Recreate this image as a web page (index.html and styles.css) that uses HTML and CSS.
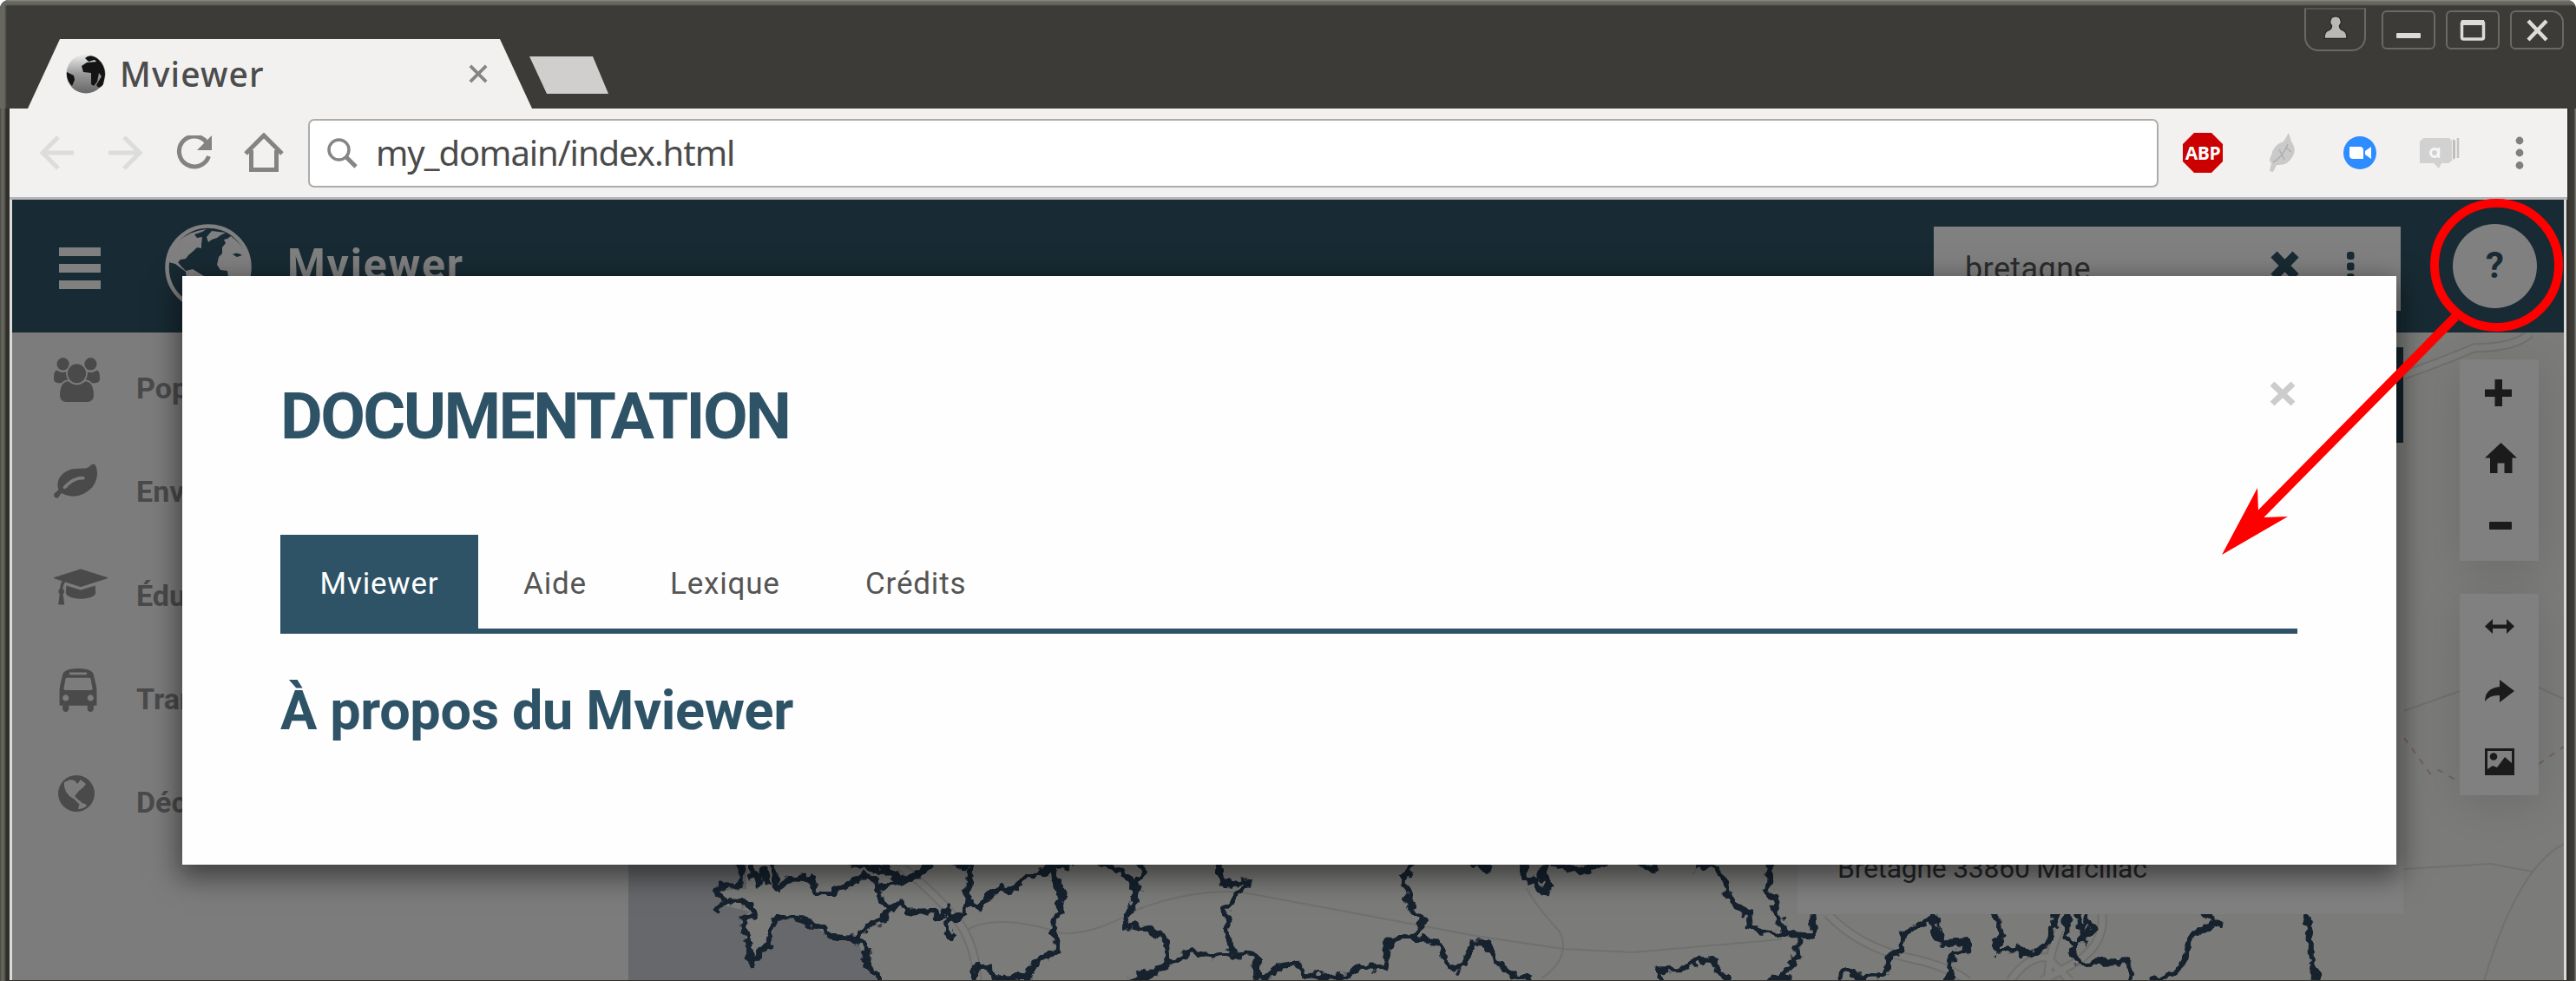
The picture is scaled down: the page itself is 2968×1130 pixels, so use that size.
FILE: index.html
```html
<!DOCTYPE html>
<html lang="fr">
<head>
<meta charset="utf-8">
<title>Mviewer</title>
<link rel="stylesheet" href="styles.css">
</head>
<body>
<div class="window">
  <div class="titlebar">
    <div class="tab">
      <svg class="favicon" viewBox="0 0 46 46"><defs><linearGradient id="fg" x1="0" y1="0" x2="0" y2="1"><stop offset="0" stop-color="#eee"/><stop offset=".5" stop-color="#999"/><stop offset="1" stop-color="#666"/></linearGradient></defs><circle cx="23" cy="23" r="22.5" fill="url(#fg)"/><path d="M22 5Q28-1 37 6Q45 13 45 24L43 35Q38 42 35 36L41 26L38 22L36 32L32 37L29 35L29 22L20 21L18 14L24 10L35 9L33 7L26 9ZM1 21L9 25L10 30L7 37Q0 30 1 21Z" fill="#141414"/></svg>
      <span class="tab-title">Mviewer</span>
      <svg class="tab-close" viewBox="0 0 24 24"><path d="M2 2L22 22M22 2L2 22" stroke="#858585" stroke-width="4"/></svg>
    </div>
    <div class="new-tab"></div>
    <div class="window-buttons">
      <div class="wb user"><svg viewBox="0 0 26 26"><path d="M13 1a5.500 5.500 0 0 1 4 9.500q0 4 3 5q5 1 5 9H1q0-8 5-9q3-1 3-5a5.500 5.500 0 0 1 4-9.500Z" fill="#b9b8b5" stroke="#20201d" stroke-width="1"/></svg></div>
      <div class="wb"><svg viewBox="0 0 30 26"><rect x="1" y="16" width="28" height="6" rx="1" fill="#dcdbd7"/></svg></div>
      <div class="wb"><svg viewBox="0 0 30 26"><rect x="2.500" y="3" width="25" height="20" rx="2" fill="none" stroke="#dcdbd7" stroke-width="3.500"/><path d="M2 4H28" stroke="#dcdbd7" stroke-width="6"/></svg></div>
      <div class="wb close"><svg viewBox="0 0 30 26"><path d="M5 2L26 24M26 2L5 24" stroke="#dcdbd7" stroke-width="4.500"/></svg></div>
    </div>
  </div>

  <div class="toolbar">
    <div class="nav">
      <svg width="40" height="40" viewBox="0 0 40 40" fill="none" stroke="#dcdcdc" stroke-width="5"><path d="M40 20H4M22 2L4 20L22 38"/></svg>
      <svg width="40" height="40" viewBox="0 0 40 40" fill="none" stroke="#dcdcdc" stroke-width="5"><path d="M0 20H36M18 2L36 20L18 38"/></svg>
      <svg width="42" height="40" viewBox="0 0 42 40"><path d="M35 8A17.500 17.500 0 1 0 37.500 24" fill="none" stroke="#838383" stroke-width="5"/><path d="M41 0V17H24Z" fill="#838383"/></svg>
      <svg width="46" height="46" viewBox="0 0 46 46" fill="none" stroke="#838383" stroke-width="5"><path d="M2 24L23 3L44 24M8.500 20V42.500H37.500V20"/></svg>
    </div>
    <div class="address">
      <svg width="35" height="35" viewBox="0 0 35 35" fill="none" stroke="#858585"><circle cx="13.500" cy="13.500" r="11.500" stroke-width="3.500"/><path d="M22 22L33 33" stroke-width="5"/></svg>
      <span class="url">my_domain/index.html</span>
    </div>
    <div class="extensions">
      <div class="abp"><svg width="46" height="46" viewBox="0 0 46 46"><path d="M13 0H33L46 13V33L33 46H13L0 33V13Z" fill="#cb0000"/></svg><span>ABP</span></div>
      <svg width="34" height="46" viewBox="0 0 34 46"><path d="M25 0L28 10Q35 20 29 28Q24 38 11 37L7 45L3 44L5 35Q1 32 5 26Q7 14 19 10Z" fill="#cacaca"/><path d="M7 34Q18 28 24 13M14 19L20 31M22 17L28 22" stroke="#aeaeae" stroke-width="1.500" fill="none"/></svg>
      <svg class="zoom" width="40" height="40" viewBox="0 0 40 40"><circle cx="20" cy="20" r="19" fill="#2d8cff"/><path d="M8 13H20Q24 13 24 17V27H12Q8 27 8 23ZM26 18L33 13V27L26 22Z" fill="#fff"/></svg>
      <svg class="chat" width="46" height="36" viewBox="0 0 46 36"><path d="M4 1H34L37 4V27L33 30H25L22 36L16 30H0V5Z" fill="#d1d1d1"/><path d="M38 2L41 4V24L38 26Z" fill="#bdbdbd"/><path d="M44 1V24" stroke="#c4c4c4" stroke-width="2.500"/><circle cx="17" cy="18" r="4.500" fill="none" stroke="#f6f6f6" stroke-width="3"/><path d="M22 12V24" stroke="#f6f6f6" stroke-width="2.500"/></svg>
      <svg class="dots" width="10" height="38" viewBox="0 0 10 38" fill="#7f7f7f"><circle cx="5" cy="5" r="4.400"/><circle cx="5" cy="19" r="4.400"/><circle cx="5" cy="33.500" r="4.400"/></svg>
    </div>
  </div>

  <div class="page">
    <header class="app-header">
      <div class="burger"><i></i><i></i><i></i></div>
      <svg class="globe" viewBox="0 0 100 100"><circle cx="50" cy="50" r="47.500" fill="none" stroke="#808080" stroke-width="4.500"/><path d="M14 21Q28 8 48 6L43 9L34 12L37 16L43 15L42 24L42 28L37 27L33 31L27 36L24 40L18 41L15 44L19 49L24 54L32 52L45 60L40 85L28 92L24 55L12 46L4 44Q6 30 14 21ZM54 8L70 10L64 13L60 16L54 18L50 21L48 15ZM76 14Q98 30 98 52L90 76L76 80L72 54L64 53L60 47L62 38L66 34L66 27L70 22L68 18L72 17Z" fill="#808080"/><path d="M78 35Q83 32 89 36L83 38Z" fill="#182a33"/></svg>
      <span class="brand">Mviewer</span>
      <div class="search">
        <span class="query">bretagne</span>
        <svg class="clear" width="33" height="34" viewBox="0 0 33 34"><path d="M4 4L29 30M29 4L4 30" stroke="#182a33" stroke-width="10"/></svg>
        <svg class="more" width="10" height="36" viewBox="0 0 10 36" fill="#182a33"><rect x="1" y="1" width="8.500" height="9" rx="3"/><rect x="1" y="13.500" width="8.500" height="9" rx="3"/><rect x="1" y="26" width="8.500" height="9" rx="3"/></svg>
      </div>
      <div class="help">?</div>
    </header>
    <div class="app-body">
      <nav class="themes">
        <div class="theme"><span class="ic"><svg width="53" height="51" viewBox="0 0 1920 1792" preserveAspectRatio="none"><path d="M593 896q-162 5-265 128h-134q-82 0-138-40.500t-56-118.500q0-353 124-353 6 0 43.500 21t97.500 42.500 119 21.500q67 0 133-23-5 37-5 66 0 139 81 256zm1071 637q0 120-73 189.500t-194 69.500h-874q-121 0-194-69.500t-73-189.500q0-53 3.500-103.500t14-109 26.500-108.500 43-97.500 62-81 85.500-53.500 111.500-20q10 0 43 21.500t73 48 107 48 135 21.500 135-21.500 107-48 73-48 43-21.500q61 0 111.500 20t85.500 53.500 62 81 43 97.500 26.500 108.500 14 109 3.500 103.500zm-1024-1277q0 106-75 181t-181 75-181-75-75-181 75-181 181-75 181 75 75 181zm704 384q0 159-112.500 271.500t-271.500 112.500-271.500-112.500-112.500-271.500 112.500-271.500 271.500-112.500 271.500 112.500 112.500 271.500zm576 225q0 78-56 118.500t-138 40.500h-134q-103-123-265-128 81-117 81-256 0-29-5-66 66 23 133 23 59 0 119-21.500t97.500-42.500 43.500-21q124 0 124 353zm-128-609q0 106-75 181t-181 75-181-75-75-181 75-181 181-75 181 75 75 181z"/></svg></span><b>Population</b></div>
        <div class="theme"><span class="ic"><svg width="50" height="50" viewBox="0 0 1792 1792"><path d="M1280 704q0-26-19-45t-45-19q-172 0-318 49.500t-259.500 134-235.500 219.500q-19 21-19 45 0 26 19 45t45 19q24 0 45-19 27-24 74-71t67-66q137-124 268.500-176t313.500-52q26 0 45-19t19-45zm512-198q0 95-20 193-46 224-184.500 383t-357.500 268q-214 108-438 108-148 0-286-47-15-5-88-42t-96-37q-16 0-39.500 32t-45 70-52.500 70-60 32q-43 0-63.500-17.500t-45.500-59.500q-2-4-6-11t-5.500-10-3-9.500-1.500-13.500q0-35 31-73.500t68-65.500 68-56 31-48q0-4-14-38t-16-44q-9-51-9-104 0-115 43.500-220t119-184.500 170.500-139 204-95.500q55-18 145-25.500t179.500-9 178.500-6 163.500-24 113.500-56.500l29.500-29.500 29.500-28 27-20 36.500-16 43.500-4.500q39 0 70.500 46t47.500 112 24 124 8 96z"/></svg></span><b>Environnement</b></div>
        <div class="theme"><span class="ic"><svg width="62" height="48" viewBox="0 0 2304 1792"><path d="M1774 836l18 316q4 69-82 128t-235 93.500-323 34.500-323-34.500-235-93.500-82-128l18-316 574 181q22 7 48 7t48-7zm530-324q0 23-22 31l-1120 352q-4 1-10 1t-10-1l-652-206q-43 34-71 111.500t-34 178.500q63 36 63 109 0 69-58 107l58 433q2 14-8 25-9 11-24 11h-192q-15 0-24-11-10-11-8-25l58-433q-58-38-58-107 0-73 65-111 11-207 98-330l-333-104q-22-8-22-31t22-31l1120-352q4-1 10-1t10 1l1120 352q22 8 22 31z"/></svg></span><b>Éducation</b></div>
        <div class="theme"><span class="ic"><svg class="bus" width="50" height="50" viewBox="0 0 1792 1792"><path d="M512 1216q0-53-37.500-90.500t-90.500-37.500-90.500 37.500-37.500 90.500 37.500 90.500 90.500 37.500 90.500-37.500 37.500-90.500zm1024 0q0-53-37.500-90.500t-90.500-37.500-90.500 37.500-37.500 90.500 37.500 90.500 90.500 37.500 90.500-37.500 37.500-90.500zm-46-396l-72-384q-5-23-22.500-37.500t-40.500-14.500h-918q-23 0-40.500 14.500t-22.500 37.500l-72 384q-5 30 14 53t49 23h1062q30 0 49-23t14-53zm-226-612q0-20-14-34t-34-14h-640q-20 0-34 14t-14 34 14 34 34 14h640q20 0 34-14t14-34zm400 725v603h-128v128q0 53-37.500 90.500t-90.500 37.500-90.500-37.500-37.500-90.500v-128h-768v128q0 53-37.500 90.500t-90.500 37.500-90.500-37.500-37.500-90.500v-128h-128v-603q0-112 25-223l103-454q9-78 97.500-137t230-89 312.500-30 312.500 30 230 89 97.500 137l105 454q23 102 23 223z"/></svg></span><b>Transports</b></div>
        <div class="theme"><span class="ic"><svg class="earth" width="42" height="42" viewBox="0 0 42 42"><circle cx="21" cy="21" r="21"/><path d="M7 8L14 5L19 6L22 10L26 5L32 10L29 14L24 18L19 24L23 28L27 31L24 33L19 28L13 24L9 19L7 13ZM25 31L31 33L33 35Q29 39 23 39Z" fill="#7c7c7c"/></svg></span><b>Découpage</b></div>
      </nav>
      <div class="map">
        <svg class="map-canvas" viewBox="724 383 2230 747" preserveAspectRatio="xMinYMin slice">
          <defs><filter id="rough" filterUnits="userSpaceOnUse" x="724" y="960" width="2230" height="170"><feTurbulence type="fractalNoise" baseFrequency=".09" numOctaves="2" seed="4"/><feDisplacementMap in="SourceGraphic" scale="15" xChannelSelector="R" yChannelSelector="G"/></filter></defs>
          <g class="roads">
            <path d="M2770 432Q2820 414 2850 401Q2900 400 2915 384" class="wide"/><path d="M2770 432Q2820 414 2850 401Q2900 400 2915 384" class="core"/>
            <path d="M2770 819L2834 796M2925 792L2954 805M2770 1001L2870 995L2918 1004M2954 972Q2900 1000 2862 1130"/>
            <path d="M2770 850L2800 891L2810 887L2832 900M2925 880L2954 860" class="border"/>
            <path d="M1111 1073Q1146 1050 1223 1075Q1261 1077 1312 1047Q1376 1023 1433 1028L1700 1078L1801 1093L1881 1097L2053 1082M1759 1023Q1769 1043 1797 1073Q1811 1103 1776 1127"/>
            <path d="M1038 998Q1083 1033 1108 1067Q1124 1093 1126 1130M2106 1053Q2141 1090 2197 1103Q2246 1113 2267 1130M2422 1053Q2425 1087 2394 1107Q2359 1127 2352 1130M2316 1130Q2337 1100 2359 1103L2385 1130M2373 1070Q2359 1103 2360 1130" class="wide"/>
            <path d="M1038 998Q1083 1033 1108 1067Q1124 1093 1126 1130M2106 1053Q2141 1090 2197 1103Q2246 1113 2267 1130M2422 1053Q2425 1087 2394 1107Q2359 1127 2352 1130M2316 1130Q2337 1100 2359 1103L2385 1130M2373 1070Q2359 1103 2360 1130" class="core"/>
          </g>
          <path class="water" d="M724 996H860V1024L824 1026L834 1043L864 1050L855 1060L867 1111L885 1088L897 1055L926 1058L958 1080L987 1082L1001 1115L1013 1130H724Z"/>
          <g filter="url(#rough)">
            <g transform="translate(700 960) scale(.6378 .3333)">
              <path class="limit" d="M240 90V180L205 180L195 195L210 235L195 270M210 235L250 240L265 260L262 285L243 295L255 380L262 455L272 420L290 385L298 320L310 290L345 292L380 320L405 358L450 365L468 320L495 300L510 262L498 235L485 195L490 160L465 145L430 180L400 203L375 200L368 158L335 155L305 187L300 90M255 90L270 180L280 120L292 180M450 365L468 400L472 465L488 485L490 530M430 100L500 125L515 150L545 160L588 100M485 195L530 155L500 110M510 262L530 240L540 270L585 270L600 290L615 260L618 290L638 290L650 235L655 120L625 100M615 290L613 340L620 362L630 345M650 240L672 250L708 185L725 200L760 150L800 115L840 105M800 100L820 210L805 340L812 410L775 440L760 490L725 500L700 505L690 462L660 465L658 530M760 490V530M890 100L935 140L955 190L943 270M968 90L955 210L945 270L935 290L940 320L980 330L1010 370L1013 445L990 480L955 495L940 520M1013 445L1060 410L1090 425L1127 415L1120 320L1115 255L1145 200L1158 160L1110 180L1103 90M1127 415L1165 410L1178 440L1165 465L1183 505L1215 460L1245 445L1260 490L1300 500L1340 490L1360 460L1405 465L1412 375L1440 360L1455 360L1475 300L1450 250L1438 150L1460 90M1455 360L1500 375L1512 430L1530 475L1550 450L1562 380L1590 380L1605 440L1640 495L1672 505"/>
            </g>
            <g transform="translate(1650 960) scale(.7015 .3333)">
              <path class="limit" d="M70 100L85 130L95 100M150 90L152 160L170 160L180 205L195 175L180 155L188 90M195 100L245 128L285 100M340 100L362 130L368 100M432 110L465 115L485 180L485 225L520 280L522 325L575 350L600 350L628 355L625 250M556 90L552 180L562 230L578 350M600 350V440L575 485L555 510L590 500M490 530L460 440L440 435L410 470L370 470L378 520M665 495L680 470L700 495L745 490L752 420L770 405L775 345L825 290L828 345L840 385L880 370L878 405L855 410L846 530M825 290V250M910 250L930 300L938 355L925 385L930 410L960 400L985 425L1015 365L1027 250M1042 250L1042 365L1060 385L1050 425L1062 450L1140 440L1155 530M1058 250L1068 370L1090 330L1075 295L1065 380M1260 260L1290 310L1250 350L1240 400L1235 450L1215 485L1180 520M1432 250L1443 370L1443 450L1460 530"/>
            </g>
          </g>
        </svg>
        <div class="results"><div class="results-head"></div><div class="results-item">Bretagne 33860 Marcillac</div></div>
        <div class="controls">
          <div class="group">
            <svg width="31" height="31" viewBox="0 0 31 31"><path d="M11.500 0H20V11.500H31V20H20V31H11.500V20H0V11.500H11.500Z"/></svg>
            <svg width="37" height="35" viewBox="0 0 37 35"><path d="M18.500 0L37 17.500H31.500V35H22.500V23.500H14.500V35H6V17.500H0Z"/></svg>
            <svg class="minus" width="26" height="9" viewBox="0 0 26 9"><rect width="26" height="9" rx="1"/></svg>
          </div>
          <div class="group second">
            <svg width="34" height="17" viewBox="0 0 34 17"><path d="M0 8.500L9 0V6.500H25V0L34 8.500L25 17V11H9V17Z"/></svg>
            <svg width="34" height="26" viewBox="0 0 34 26"><path d="M17 0L34 13L17 26V18Q6 17 0 25Q0 10 17 8Z"/></svg>
            <svg width="34" height="31" viewBox="0 0 34 31"><path d="M0 0H34V31H0ZM3 3V24L9 20L14 22L23 10L31 17V3Z" fill-rule="evenodd"/><circle cx="10" cy="9.500" r="4.300"/></svg>
          </div>
        </div>
      </div>
    </div>

    <section class="modal">
      <div class="modal-head">
        <h1>DOCUMENTATION</h1>
        <svg class="modal-close" width="30" height="29" viewBox="0 0 30 29"><path d="M3 3L27 26M27 3L3 26" stroke="#ccc" stroke-width="7"/></svg>
      </div>
      <div class="tabs"><a class="active">Mviewer</a><a class="aide">Aide</a><a class="lexique">Lexique</a><a class="credits">Crédits</a></div>
      <h2>À propos du Mviewer</h2>
    </section>
  </div>
  <svg class="callout" viewBox="0 0 2968 1130"><circle cx="2876.500" cy="305.500" r="71.500" fill="none" stroke="#f00" stroke-width="10"/><path d="M2829 365L2598 599" stroke="#f00" stroke-width="10.500"/><path d="M2560 639L2601 562L2602 590L2608 596L2636 595Z" fill="#f00"/></svg>
</div>
</body>
</html>
```
FILE: styles.css
```css
* { box-sizing: border-box; }
body { margin: 0; background: #fff; font-family: Roboto, "Liberation Sans", sans-serif; }
svg { display: block; flex: none; }
.window {
  position: relative; width: 2968px; height: 1130px; overflow: hidden;
  display: flex; flex-direction: column; padding: 0 11px;
  border-radius: 10px 10px 0 0;
  background: linear-gradient(90deg, #45453f 0, #66675f 2px, #5d5e57 5px, #302f2a 7px, #302f2a 11px, #302f2a 2958px, #3c3b37 2962px, #3c3b37 2966px, #777872 2967px);
}
.titlebar {
  height: 125px; margin: 0 -11px; padding: 0 14px 0 32px; display: flex; flex: none;
  background: linear-gradient(90deg, #66675f 0, #66675f 5px, transparent 8px), linear-gradient(#8d8e89 0, #66675f 2px, #66675f 5px, #3c3b37 7px);
}
.tab {
  width: 581px; height: 80px; margin-top: 45px; padding: 0 51px 0 44px;
  display: flex; align-items: center; background: #f2f1ef;
  clip-path: polygon(0 100%, 37px 0, 544px 0, 100% 100%);
}
.favicon { width: 46px; height: 46px; }
.tab-title { font: 500 39px/80px "Noto Sans", sans-serif; color: #4c4c4c; margin-left: 16px; letter-spacing: 1.100px; }
.tab-close { width: 22px; height: 22px; margin-left: auto; }
.new-tab { width: 91px; height: 43px; margin: 65px 0 0 -3px; background: #d0cfcd; clip-path: polygon(0 0, 73px 0, 100% 100%, 20px 100%); }
.window-buttons { display: flex; margin-left: auto; gap: 12px; padding-top: 12px; }
.wb { width: 62px; height: 45px; border: 2px solid #6a6963; border-radius: 6px; display: flex; align-items: center; justify-content: center; }
.wb svg { width: 30px; height: 26px; }
.wb.close { border-radius: 6px 14px 6px 6px; }
.wb.user { width: 71px; height: 50px; margin: -3px 6px 0 0; border-radius: 0 0 16px 16px; border-top-color: #55544f; }
.wb.user svg { width: 28px; height: 28px; margin-top: -5px; }

.toolbar { height: 105px; flex: none; margin-right: -1px; padding: 12px 0 0 34px; display: flex; background: #f2f1ef; border-bottom: 3px solid #b5b6b8; }
.nav { display: flex; align-items: center; height: 78px; gap: 40px; }
.nav svg:nth-child(3) { margin-left: -2px; }
.nav svg:nth-child(4) { margin-left: -4px; }
.address { width: 2132px; height: 79px; margin-left: 28px; padding-left: 20px; display: flex; align-items: center; background: #fff; border: 2px solid #acacac; border-radius: 7px; }
.url { font: 40px/74px "Noto Sans", sans-serif; color: #4a4a4a; margin-left: 21px; margin-top: -2px; letter-spacing: -1.050px; }
.extensions { display: flex; align-items: center; height: 78px; margin-left: 28px; }
.abp { position: relative; width: 46px; height: 46px; margin-right: 51px; }
.abp span { position: absolute; left: 2px; top: 8px; width: 42px; text-align: center; font: bold 21px/30px "Open Sans", sans-serif; letter-spacing: -.5px; color: #fff; }
.zoom { margin-left: 53px; }
.chat { margin-left: 49px; }
.dots { margin-left: 64px; }

.page { position: relative; flex: 1; display: flex; flex-direction: column; margin: 0 0 1px 0; border-left: 3px solid #dcdbd9; border-right: 3px solid #dcdbd9; }
.app-header { height: 153px; flex: none; background: #182a33; display: flex; padding: 0 31px 0 54px; }
.burger { display: flex; flex-direction: column; gap: 9px; width: 48px; padding-top: 55px; }
.burger i { height: 10px; background: #808080; }
.globe { width: 100px; height: 100px; margin: 28px 0 0 74px; }
.brand { font: bold 50px/80px Roboto, sans-serif; letter-spacing: 1.800px; color: #808080; margin: 35px 0 0 41px; }
.search { margin: 31px 0 0 auto; width: 538px; height: 97px; background: #808080; display: flex; padding-left: 36px; }
.query { font: 36px/60px Roboto, sans-serif; letter-spacing: .400px; color: #2c2c2c; margin-top: 19px; width: 352px; }
.clear { margin-top: 28px; }
.more { margin: 28px 0 0 54px; }
.help { width: 97px; height: 97px; margin: 28px 0 0 60px; border-radius: 50%; background: #808080; color: #182a33; font: bold 42px/96px Roboto, sans-serif; text-align: center; }
.app-body { flex: 1; display: flex; min-height: 0; }
.themes { width: 710px; flex: none; background: #7c7c7c; padding-top: 20px; color: #4a4a4a; }
.theme { height: 119.300px; display: flex; padding-left: 48px; }
.theme svg { fill: #4a4a4a; }
.theme .ic { width: 95px; height: 70px; display: flex; align-items: center; padding-bottom: 2px; }
.theme .bus { margin-left: 3px; }
.theme .earth { margin-left: 5px; }
.theme b { font: bold 34px/40px Roboto, sans-serif; margin-top: 24px; }
.map { flex: 1; position: relative; background: #7b7b79; display: flex; justify-content: flex-end; overflow: hidden; }
.map-canvas { position: absolute; left: 0; top: 0; width: 2230px; height: 747px; }
.water { fill: #66686b; }
.limit { fill: none; stroke: #18222f; stroke-width: 7px; vector-effect: non-scaling-stroke; stroke-linejoin: round; }
.roads path { fill: none; stroke: #707070; stroke-width: 2px; }
.roads .wide { stroke: #6f6f6d; stroke-width: 11px; }
.roads .core { stroke: #7d7d7b; stroke-width: 7px; }
.roads .border { stroke: #735f5f; stroke-dasharray: 7 8; }
.results { position: relative; width: 698px; height: 653px; margin: 17px 65px 0 0; background: #808080; display: flex; flex-direction: column; justify-content: space-between; }
.results-head { height: 110px; background: #13242d; }
.results-item { font: 32px/40px Roboto, sans-serif; letter-spacing: -.300px; color: #252525; padding: 0 0 33px 46px; }
.controls { position: relative; width: 91px; margin: 31px 29px 0 0; }
.group { height: 232px; padding: 23px 0 0 29px; background: #808080; box-shadow: 0 10px 50px rgba(0,0,0,.12); display: flex; flex-direction: column; gap: 42px; }
.group svg { fill: #1b1b1b; }
.group .minus { margin: 14px 0 0 5px; }
.group.second { margin-top: 38px; padding-top: 29px; gap: 53px; }

.modal { position: absolute; left: 196px; top: 88px; width: 2551px; height: 678px; background: #fefefe; padding: 121px 114px 0 113px; box-shadow: 0 10px 30px 4px rgba(0,0,0,.5); color: #2e5266; }
.modal-head { display: flex; justify-content: space-between; height: 177px; padding-right: 2px; }
h1 { margin: 0; font: bold 75px/80px Roboto, sans-serif; letter-spacing: -2.600px; }
.tabs { height: 114px; display: flex; border-bottom: 6px solid #2e5266; font: 35px/114px Roboto, sans-serif; letter-spacing: .800px; color: #555; }
.tabs a { height: 114px; white-space: nowrap; }
.tabs .active { width: 228px; text-align: center; background: #2e5266; color: #fff; }
.tabs .aide { margin-left: 52px; width: 169px; }
.tabs .lexique { width: 225px; }
h2 { margin: 49px 0 0; font: bold 63px/80px Roboto, sans-serif; letter-spacing: -.350px; }
.callout { position: absolute; left: 0; top: 0; width: 2968px; height: 1130px; }
```
